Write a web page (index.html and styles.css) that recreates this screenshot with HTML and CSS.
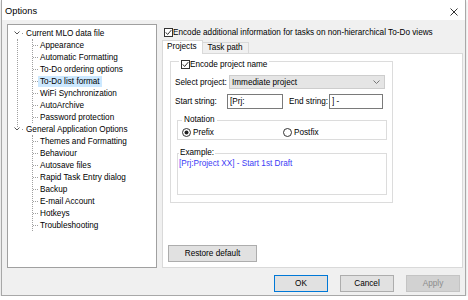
FILE: index.html
```html
<!DOCTYPE html>
<html lang="en">
<head>
  <meta charset="UTF-8">
  <meta name="viewport" content="width=device-width, initial-scale=1.0">
  <title>Options</title>
  <link rel="stylesheet" href="styles.css">
</head>
<body>
  <div class="window">
    <div class="titlebar">
      <span class="title">Options</span>
      <svg class="close-x" width="8" height="8" viewBox="0 0 8 8">
        <path d="M0.5 0.5 L7.5 7.5 M7.5 0.5 L0.5 7.5" stroke="#333" stroke-width="1" fill="none"/>
      </svg>
    </div>

    <div class="dialog">
      <div class="main">
        <!-- Options tree -->
        <div class="tree">
          <div class="root">
            <svg class="chev" width="6" height="4" viewBox="0 0 6 4"><path d="M0.5 0.5 L3 3 L5.5 0.5" fill="none" stroke="#555"/></svg>
            <span class="stub"></span>
            <span>Current MLO data file</span>
          </div>
          <div class="branch">
            <div class="kids">
              <div class="leaf"><span class="dash"></span><span class="label">Appearance</span></div>
              <div class="leaf"><span class="dash"></span><span class="label">Automatic Formatting</span></div>
              <div class="leaf"><span class="dash"></span><span class="label">To-Do ordering options</span></div>
              <div class="leaf"><span class="dash"></span><span class="label selected">To-Do list format</span></div>
              <div class="leaf"><span class="dash"></span><span class="label">WiFi Synchronization</span></div>
              <div class="leaf"><span class="dash"></span><span class="label">AutoArchive</span></div>
              <div class="leaf"><span class="dash"></span><span class="label">Password protection</span></div>
            </div>
          </div>
          <div class="root">
            <svg class="chev" width="6" height="4" viewBox="0 0 6 4"><path d="M0.5 0.5 L3 3 L5.5 0.5" fill="none" stroke="#555"/></svg>
            <span class="stub"></span>
            <span>General Application Options</span>
          </div>
          <div class="branch last">
            <div class="kids">
              <div class="leaf"><span class="dash"></span><span class="label">Themes and Formatting</span></div>
              <div class="leaf"><span class="dash"></span><span class="label">Behaviour</span></div>
              <div class="leaf"><span class="dash"></span><span class="label">Autosave files</span></div>
              <div class="leaf"><span class="dash"></span><span class="label">Rapid Task Entry dialog</span></div>
              <div class="leaf"><span class="dash"></span><span class="label">Backup</span></div>
              <div class="leaf"><span class="dash"></span><span class="label">E-mail Account</span></div>
              <div class="leaf"><span class="dash"></span><span class="label">Hotkeys</span></div>
              <div class="leaf"><span class="dash"></span><span class="label">Troubleshooting</span></div>
            </div>
          </div>
        </div>

        <!-- Settings pane -->
        <div class="pane">
          <div class="check top-check">
            <svg class="box" width="9" height="9" viewBox="0 0 9 9"><rect x="0.5" y="0.5" width="8" height="8" fill="#fff" stroke="#333"/><path d="M1.8 4.4 L3.6 6.5 L7.3 2.1" fill="none" stroke="#333"/></svg>
            <span>Encode additional information for tasks on non-hierarchical To-Do views</span>
          </div>

          <div class="tabs">
            <div class="tab active">Projects</div>
            <div class="tab">Task path</div>
          </div>

          <div class="tab-page">
            <div class="group">
              <div class="legend check">
                <svg class="box" width="9" height="9" viewBox="0 0 9 9"><rect x="0.5" y="0.5" width="8" height="8" fill="#fff" stroke="#333"/><path d="M1.8 4.4 L3.6 6.5 L7.3 2.1" fill="none" stroke="#333"/></svg>
                <span>Encode project name</span>
              </div>

              <div class="form-row select-row">
                <span class="field-label">Select project:</span>
                <div class="combo">
                  <span>Immediate project</span>
                  <svg width="7" height="4" viewBox="0 0 7 4"><path d="M0.5 0.5 L3.5 3.5 L6.5 0.5" fill="none" stroke="#777"/></svg>
                </div>
              </div>

              <div class="form-row string-row">
                <span class="field-label start-label">Start string:</span>
                <input class="textbox start-box" type="text" value="[Prj:">
                <span class="field-label end-label">End string:</span>
                <input class="textbox end-box" type="text" value="] -">
              </div>

              <div class="subgroup notation">
                <div class="sub-legend">Notation</div>
                <div class="radios">
                  <div class="radio prefix">
                    <svg width="9" height="9" viewBox="0 0 9 9"><circle cx="4.5" cy="4.5" r="4" fill="#fff" stroke="#333"/><circle cx="4.5" cy="4.5" r="2" fill="#222"/></svg>
                    <span>Prefix</span>
                  </div>
                  <div class="radio">
                    <svg width="9" height="9" viewBox="0 0 9 9"><circle cx="4.5" cy="4.5" r="4" fill="#fff" stroke="#333"/></svg>
                    <span>Postfix</span>
                  </div>
                </div>
              </div>

              <div class="subgroup example">
                <div class="sub-legend">Example:</div>
                <div class="example-text">[Prj:Project XX] - Start 1st Draft</div>
              </div>
            </div>

            <button class="btn restore-btn">Restore default</button>
          </div>
        </div>
      </div>

      <div class="dialog-buttons">
        <button class="btn ok-btn">OK</button>
        <button class="btn">Cancel</button>
        <button class="btn apply-btn" disabled>Apply</button>
      </div>
    </div>
  </div>
</body>
</html>
```

FILE: styles.css
```css
/* General styles */
body {
  margin: 0;
  background-color: #fff;
  font-family: "Liberation Sans", Arial, sans-serif;
  font-size: 8.2px;
  color: #000;
}
.window {
  margin-left: 1px;
  width: 463px;
  height: 295px;
  border: 1px solid #a8a8a8;
  border-top: none;
  display: flex;
  flex-direction: column;
  box-shadow: 0 1px 3px rgba(0, 0, 0, 0.2);
}
.titlebar {
  height: 20px;
  background-color: #fff;
  display: flex;
  align-items: center;
  justify-content: space-between;
  padding: 0 7px 0 3px;
}
.title {
  font-size: 9.3px;
  padding-top: 2px;
}
.close-x {
  margin-top: 3px;
}
.dialog {
  flex: 1;
  background-color: #f0f0f0;
  padding: 4px 2px 3px 5px;
  display: flex;
  flex-direction: column;
}
.main {
  display: flex;
  gap: 5px;
  height: 244px;
}

/* Tree */
.tree {
  width: 150px;
  box-sizing: border-box;
  border: 1px solid #a0a0a0;
  background-color: #fff;
  padding-top: 2px;
}
.root {
  height: 12px;
  display: flex;
  align-items: center;
  padding-left: 6px;
  white-space: nowrap;
}
.chev {
  margin-right: 2px;
}
.stub {
  width: 1px;
  height: 1px;
  background-color: #999;
  margin-right: 3px;
}
.branch {
  margin-left: 9px;
  border-left: 1px dotted #a0a0a0;
  padding-bottom: 4px;
}
.branch + .root {
  margin-top: -4px;
}
.branch.last {
  border-left-color: transparent;
  padding-bottom: 0;
}
.kids {
  margin-left: 14px;
  border-left: 1px dotted #a0a0a0;
}
.leaf {
  height: 12px;
  display: flex;
  align-items: center;
  white-space: nowrap;
}
.dash {
  width: 5px;
  border-top: 1px dotted #a0a0a0;
}
.label {
  padding: 0 2px;
  height: 11px;
  line-height: 11px;
}
.label.selected {
  background-color: #cce8ff;
}

/* Right pane */
.pane {
  flex: 1;
  display: flex;
  flex-direction: column;
}
.check {
  display: flex;
  align-items: center;
  height: 10px;
  white-space: nowrap;
}
.top-check {
  margin: 3px 0 0 2px;
}
.tabs {
  display: flex;
  align-items: flex-end;
  margin-top: 3px;
  height: 13px;
}
.tab {
  box-sizing: border-box;
  height: 11px;
  line-height: 10px;
  padding: 0 5px;
  border: 1px solid #d9d9d9;
  border-bottom: none;
  border-left: none;
  background-color: #f0f0f0;
}
.tab.active {
  height: 14px;
  line-height: 12px;
  padding: 0 5px 0 4px;
  border-left: 1px solid #d9d9d9;
  background-color: #fff;
  margin-bottom: -1px;
  position: relative;
  z-index: 1;
}
.tab-page {
  flex: 1;
  background-color: #fff;
  border: 1px solid #d9d9d9;
  display: flex;
  flex-direction: column;
  padding: 7px 0 5px 5px;
}

/* Group boxes */
.group {
  width: 223px;
  box-sizing: border-box;
  margin-left: 2px;
  border: 1px solid #dcdcdc;
  padding: 0 7px 7px 4px;
  display: flex;
  flex-direction: column;
}
.legend {
  align-self: flex-start;
  margin: -3px 0 0 4px;
  padding: 0 2px;
  background-color: #fff;
}
.form-row {
  display: flex;
  align-items: center;
}
.select-row {
  margin-top: 6px;
  height: 14px;
}
.field-label {
  width: 54px;
  white-space: nowrap;
}
.combo {
  flex: 1;
  height: 14px;
  box-sizing: border-box;
  background-color: #e5e5e5;
  border: 1px solid #cdcdcd;
  display: flex;
  align-items: center;
  justify-content: space-between;
  padding: 0 4px 0 2px;
}
.string-row {
  margin-top: 5px;
  height: 15px;
}
.start-label {
  width: 52px;
}
.end-label {
  width: 40px;
  margin-left: 6px;
}
.textbox {
  box-sizing: border-box;
  height: 15px;
  margin: 0;
  padding: 0 2px;
  border: 1px solid #7a7a7a;
  font-family: inherit;
  font-size: inherit;
  color: #000;
  background-color: #fff;
}
.start-box {
  width: 56px;
}
.end-box {
  width: 54px;
}
.subgroup {
  width: 210px;
  box-sizing: border-box;
  margin-left: 2px;
  border: 1px solid #dcdcdc;
  display: flex;
  flex-direction: column;
}
.sub-legend {
  align-self: flex-start;
  height: 10px;
  line-height: 10px;
  margin: -6px 0 0 2px;
  padding: 0 2px;
  background-color: #fff;
}
.notation {
  margin-top: 11px;
  padding: 0 0 2px 4px;
}
.notation .sub-legend {
  margin-left: 0;
}
.radios {
  display: flex;
  align-items: center;
  height: 10px;
  margin-top: 2px;
}
.radio {
  display: flex;
  align-items: center;
  gap: 2px;
}
.radio.prefix {
  width: 101px;
}
.example {
  margin-top: 13px;
  height: 42px;
  padding-left: 1px;
}
.example .sub-legend {
  margin-left: 0;
  padding: 0 1px;
}
.example-text {
  margin-top: 1px;
  line-height: 10px;
  color: #3b3bf5;
}

/* Buttons */
.btn {
  height: 17px;
  box-sizing: border-box;
  border: 1px solid #adadad;
  background-color: #e1e1e1;
  font-family: inherit;
  font-size: inherit;
  color: #000;
  padding: 0;
}
.restore-btn {
  width: 89px;
  margin: auto 0 0 0;
  align-self: flex-start;
}
.dialog-buttons {
  display: flex;
  justify-content: flex-end;
  gap: 12px;
  margin-top: 7px;
  padding-right: 3px;
}
.dialog-buttons .btn {
  width: 54px;
}
.ok-btn {
  border-color: #0078d7;
}
.apply-btn {
  background-color: #d2d2d2;
  border-color: #c4c4c4;
  color: #8c8c8c;
}
```
